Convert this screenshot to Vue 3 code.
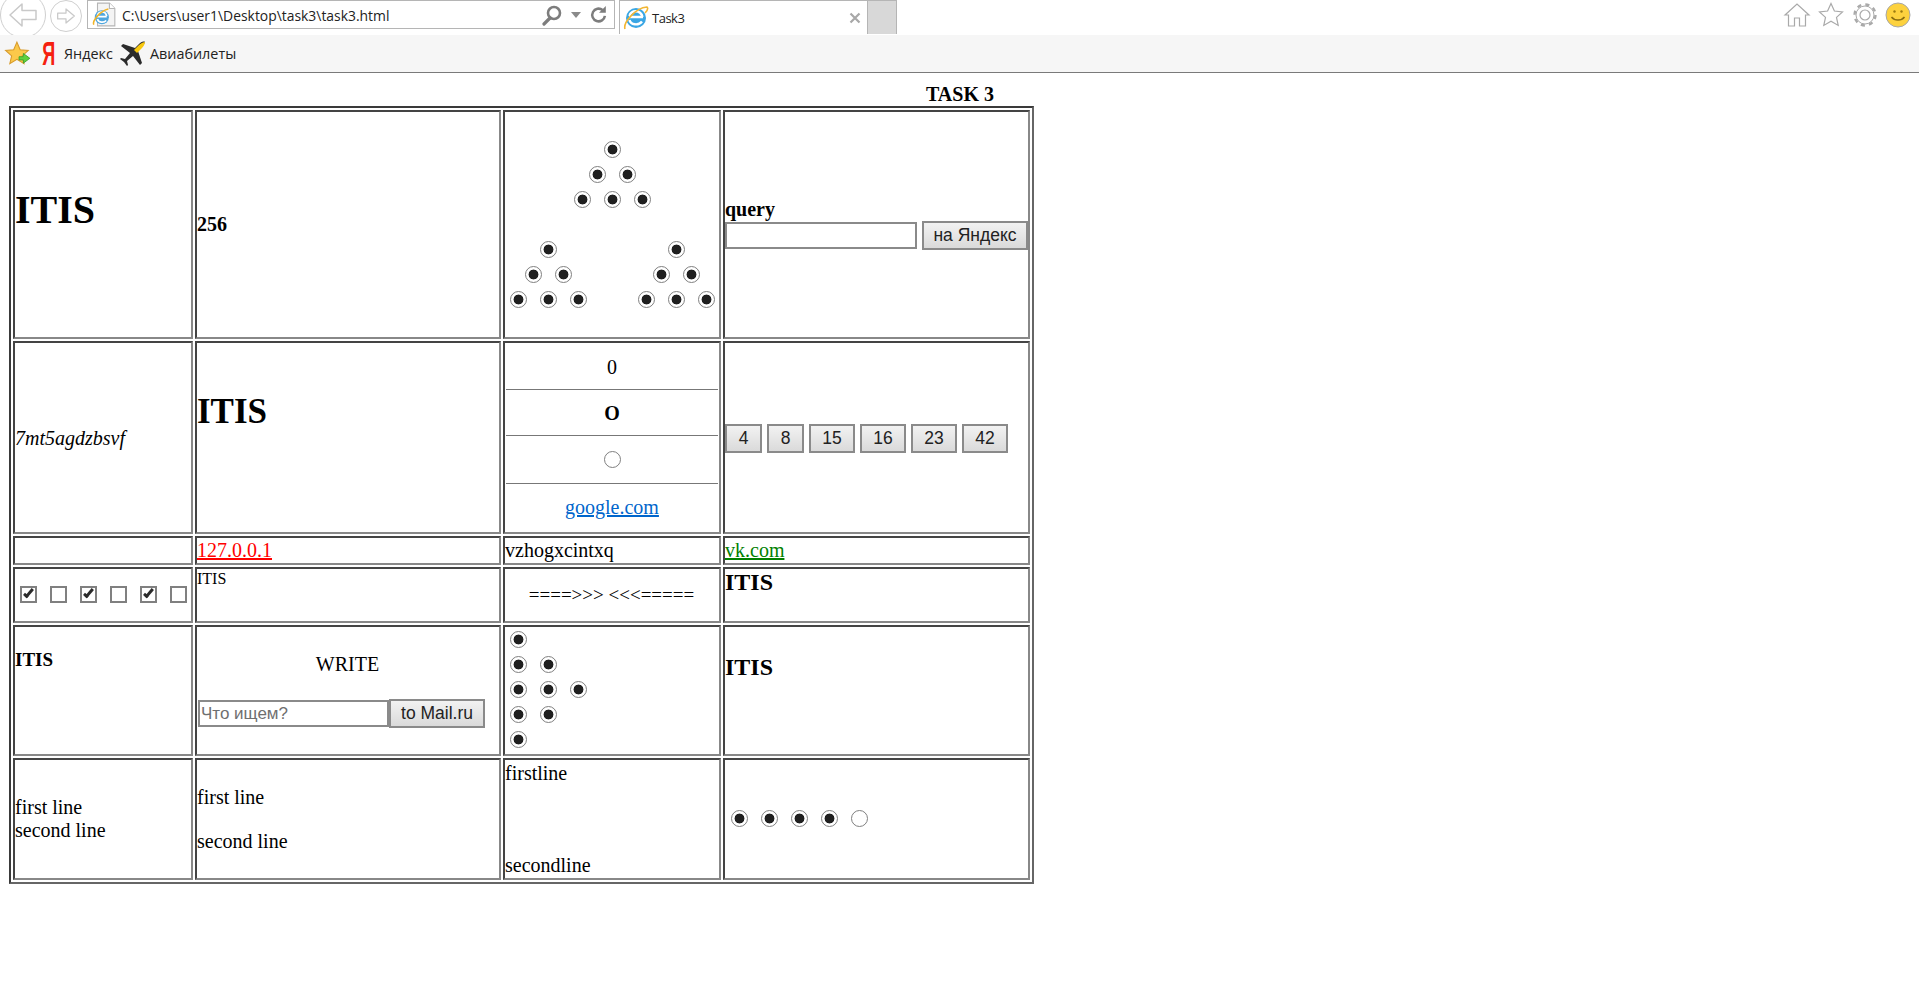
<template>
  <div class="browser">
    <header class="chrome">
      <div class="top-row">
        <div class="nav">
          <button class="nav-btn back" aria-label="back">
            <svg viewBox="0 0 32 32" width="32" height="32"><path d="M3 16 15 5v6.500h14v9H15V27z" fill="none" stroke="#c9c9c9" stroke-width="1.500" stroke-linejoin="round"/></svg>
          </button>
          <button class="nav-btn forward" aria-label="forward">
            <svg viewBox="0 0 24 24" width="20" height="20"><path d="M22 12 12 3.500v5H2v7h10v5z" fill="none" stroke="#c9c9c9" stroke-width="1.500" stroke-linejoin="round"/></svg>
          </button>
        </div>
        <div class="address">
          <svg class="page-icon" viewBox="0 0 24 24" width="26" height="26">
            <path d="M6 1h11l5 5v16H6z" fill="#f4f4f4" stroke="#b5b5b5"/>
            <path d="M17 1v5h5" fill="#fff" stroke="#b5b5b5"/>
            <circle cx="10" cy="14" r="6.500" fill="#4da6de"/>
            <path d="M5.500 13.500h9M6 15.500c.5 3.500 6 4 8 1.500M6 13c0-4 7-6 8.500 0" fill="none" stroke="#fff" stroke-width="1.600"/>
            <path d="M2.500 21C1 17 9 8 16 6.500" fill="none" stroke="#f0b429" stroke-width="1.400"/>
          </svg>
          <span class="url">C:\Users\user1\Desktop\task3\task3.html</span>
          <span class="addr-tools">
            <svg viewBox="0 0 22 22" width="22" height="22"><circle cx="13" cy="9" r="6" fill="none" stroke="#7d7d7d" stroke-width="2.600"/><path d="M9 14 3 20" stroke="#7d7d7d" stroke-width="3.200" stroke-linecap="round"/></svg>
            <svg viewBox="0 0 10 6" width="10" height="6"><path d="M0 0h10L5 6z" fill="#8a8a8a"/></svg>
            <svg viewBox="0 0 22 22" width="20" height="20"><path d="M17.500 12a7 7 0 1 1-2.600-6.500" fill="none" stroke="#7d7d7d" stroke-width="2.800"/><path d="M18.500 1v7.500H11z" fill="#7d7d7d"/></svg>
          </span>
        </div>
        <div class="tab">
          <svg viewBox="0 0 26 26" width="26" height="26">
            <circle cx="13" cy="13" r="10" fill="#3aa6e4"/>
            <path d="M6 12h14M6.500 15c1 5 9 6 12.500 1.500M6.500 11c1-6 11-7 13 1" fill="none" stroke="#fff" stroke-width="2.400"/>
            <path d="M2 24C0 18 12 3 24 2c2 2-1 5-2 6" fill="none" stroke="#f2b632" stroke-width="1.600"/>
          </svg>
          <span class="tab-title">Task3</span>
          <svg class="tab-close" viewBox="0 0 12 12" width="12" height="12"><path d="M1.500 1.500l9 9m0-9-9 9" stroke="#a8a8a8" stroke-width="2.200"/></svg>
        </div>
        <div class="new-tab"></div>
        <div class="right-tools">
          <svg viewBox="0 0 28 28" width="28" height="28"><path d="M2 14 14 3l12 11h-3.500v11h-6v-8h-5v8h-6V14z" fill="none" stroke="#a9a9a9" stroke-width="1.200"/></svg>
          <svg viewBox="0 0 28 28" width="28" height="28"><path d="m14 2.500 3.400 7.500 8.100.9-6 5.500 1.700 8-7.200-4.100-7.200 4.100 1.700-8-6-5.500 8.100-.9z" fill="none" stroke="#a9a9a9" stroke-width="1.200"/></svg>
          <svg viewBox="0 0 28 28" width="28" height="28"><circle cx="14" cy="14" r="5" fill="none" stroke="#a9a9a9" stroke-width="1.200"/><circle cx="14" cy="14" r="10.500" fill="none" stroke="#a9a9a9" stroke-width="2.400" stroke-dasharray="4.100 4.150"/><circle cx="14" cy="14" r="9" fill="none" stroke="#a9a9a9" stroke-width="1"/></svg>
          <svg viewBox="0 0 26 26" width="26" height="26"><circle cx="13" cy="13" r="12" fill="#fdd23e" stroke="#a8a8a8"/><circle cx="9.500" cy="9.500" r="1.200" fill="#9a7a10"/><circle cx="16.500" cy="9.500" r="1.200" fill="#9a7a10"/><path d="M6.500 15c3 4 10 4 13 0" fill="none" stroke="#8a6d10" stroke-width="1.500"/></svg>
        </div>
      </div>
      <div class="fav-row">
        <svg viewBox="0 0 26 26" width="28" height="28"><path d="m12 2 3 7 7.500.7-5.600 5 1.700 7.300L12 18l-6.600 4 1.700-7.300-5.600-5L9 9z" fill="#fbc94a" stroke="#d79a2b"/><path d="M14 15.500h4v-3l6 4.500-6 4.500v-3h-4z" fill="#5fd13f" stroke="#3b9e28" stroke-width=".8"/></svg>
        <span class="ya"><span>Я</span></span>
        <span class="fav-text">Яндекс</span>
        <svg class="plane" viewBox="0 0 26 26" width="26" height="26"><path d="M25 1c-2-1-4 0-6 2l-4 4L3 3 1 5l9 7-5 6-4-1-1 1 4 3 3 4 1-1-1-4 6-5 7 9 2-2-4-12 4-4c2-2 3-5 3-6z" fill="#2b2b2b"/><path d="M25 1c-1 0-4 1-6 3l-5 5 3 3 5-5c2-2 3-5 3-6z" fill="#f8c80e"/></svg>
        <span class="fav-text tight">Авиабилеты</span>
      </div>
    </header>

    <main class="page">
      <table class="task">
        <caption>TASK 3</caption>
        <colgroup>
          <col class="c1" /><col class="c2" /><col class="c3" /><col class="c4" />
        </colgroup>
        <tbody>
          <tr class="r1">
            <td><h1>ITIS</h1></td>
            <td><b>256</b></td>
            <td class="center tree-cell">
              <div v-for="(n, i) in [1, 2, 3]" :key="i" class="radios line">
                <input v-for="k in n" :key="k" type="radio" checked />
              </div>
              <div class="tree-gap"></div>
              <div class="tree-pair">
                <div v-for="side in 2" :key="side" class="half">
                  <div v-for="(n, i) in [1, 2, 3]" :key="i" class="radios line">
                    <input v-for="k in n" :key="k" type="radio" checked />
                  </div>
                </div>
              </div>
            </td>
            <td>
              <b class="query">query</b>
              <div class="search">
                <input type="text" class="field q" />
                <button class="btn ya-btn">на Яндекс</button>
              </div>
            </td>
          </tr>
          <tr class="r2">
            <td class="seven"><i>7mt5agdzbsvf</i></td>
            <td><span class="h2">ITIS</span></td>
            <td class="stack">
              <div class="s1">0</div>
              <hr />
              <div class="s2"><b>O</b></div>
              <hr />
              <div class="s3 radios"><input type="radio" /></div>
              <hr />
              <div class="s4"><a href="#" class="blue">google.com</a></div>
            </td>
            <td>
              <div class="nums">
                <button v-for="n in nums" :key="n" class="btn num">{{ n }}</button>
              </div>
            </td>
          </tr>
          <tr class="r3">
            <td></td>
            <td><a href="#" class="red">127.0.0.1</a></td>
            <td>vzhogxcintxq</td>
            <td><a href="#" class="green">vk.com</a></td>
          </tr>
          <tr class="r4">
            <td>
              <div class="checks">
                <input v-for="(c, i) in checks" :key="i" type="checkbox" :checked="c" />
              </div>
            </td>
            <td class="top small">ITIS</td>
            <td class="center arrows">====&gt;&gt;&gt; &lt;&lt;&lt;=====</td>
            <td class="top tight-top"><span class="h3 raised">ITIS</span></td>
          </tr>
          <tr class="r5">
            <td class="itis-small"><b>ITIS</b></td>
            <td>
              <div class="center write">WRITE</div>
              <div class="mail">
                <input type="text" class="field m" placeholder="Что ищем?" />
                <button class="btn mail-btn">to Mail.ru</button>
              </div>
            </td>
            <td class="flower">
              <div v-for="(n, i) in [1, 2, 3, 2, 1]" :key="i" class="radios line left">
                <input v-for="k in n" :key="k" type="radio" checked />
              </div>
            </td>
            <td class="itis-big"><span class="h3">ITIS</span></td>
          </tr>
          <tr class="r6">
            <td>first line<br />second line</td>
            <td><p>first line</p><p>second line</p></td>
            <td class="spread"><div>firstline</div><div>secondline</div></td>
            <td>
              <div class="radios row6">
                <input v-for="(c, i) in [true, true, true, true, false]" :key="i" type="radio" :checked="c" />
              </div>
            </td>
          </tr>
        </tbody>
      </table>
    </main>
  </div>
</template>

<script setup>
const nums = [4, 8, 15, 16, 23, 42];
const checks = [true, false, true, false, true, false];
</script>

<style>
html, body {
  background: #fff;
}
</style>

<style scoped>
.browser {
  font-family: "Liberation Serif", serif;
  color: #000;
}

.chrome {
  font-family: "Open Sans", sans-serif;
  height: 73px;
  box-sizing: border-box;
  border-bottom: 1px solid #7a7a7a;
  background: #f6f6f6;
}

.top-row {
  display: flex;
  height: 35px;
  background: #fff;
  overflow: hidden;
}

.nav {
  display: flex;
  align-items: center;
  width: 87px;
  flex: none;
}

.nav-btn {
  border: 1px solid #cfcfcf;
  border-radius: 50%;
  background: #fff;
  padding: 0;
  display: flex;
  align-items: center;
  justify-content: center;
  flex: none;
}

.back {
  width: 46px;
  height: 46px;
  margin-top: -6px;
}

.forward {
  width: 32px;
  height: 32px;
  margin-left: 4px;
  margin-top: -3px;
}

.address {
  width: 528px;
  height: 29px;
  flex: none;
  margin-right: 2px;
  box-sizing: border-box;
  border: 1px solid #b5b5b5;
  display: flex;
  align-items: center;
  padding: 0 5px 0 3px;
}

.page-icon {
  flex: none;
}

.url {
  font-size: 13.900px;
  margin-left: 5px;
  flex: 1;
  color: #222;
  padding-top: 1px;
}

.addr-tools {
  display: flex;
  align-items: center;
  gap: 8px;
}

.tab {
  width: 249px;
  height: 34px;
  flex: none;
  box-sizing: border-box;
  border: 1px solid #b5b5b5;
  border-bottom: 0;
  margin-left: 2px;
  display: flex;
  align-items: center;
  padding: 0 6px 0 3px;
  gap: 3px;
}

.tab-title {
  flex: 1;
  font-size: 13px;
  letter-spacing: -0.5px;
  color: #222;
}

.new-tab {
  width: 29px;
  height: 34px;
  flex: none;
  box-sizing: border-box;
  background: #d8d8d8;
  border: 1px solid #b5b5b5;
  border-left: 0;
  border-bottom: 0;
}

.right-tools {
  margin-left: auto;
  display: flex;
  align-items: center;
  gap: 6px;
  padding: 0 8px 6px 0;
}

.fav-row {
  display: flex;
  align-items: center;
  height: 37px;
  padding-left: 4px;
}

.ya {
  width: 14px;
  margin-left: 10px;
  display: flex;
  justify-content: center;
  font-family: "Liberation Sans", sans-serif;
  font-weight: bold;
  color: #f5200e;
  font-size: 33px;
  line-height: 1;
}

.ya span {
  display: inline-block;
  transform: scaleX(0.55);
}

.fav-text {
  font-size: 14.400px;
  color: #222;
  margin-left: 8px;
}

.fav-text.tight {
  margin-left: 4px;
}

.plane {
  margin-left: 7px;
}

.page {
  padding: 10px 0 0 9px;
}

.task {
  width: 1025px;
  table-layout: fixed;
  border-collapse: separate;
  border-spacing: 2px;
  border: 2px solid #3a3a3a;
  border-right-color: #666;
  border-bottom-color: #666;
  font-size: 20px;
  line-height: 23px;
}

.task caption {
  text-align: right;
  font-weight: bold;
  font-size: 20px;
  line-height: 23px;
  padding-right: 40px;
}

.c1 { width: 180px; }
.c2 { width: 306px; }
.c3 { width: 218px; }

.task td {
  border: 2px solid #444;
  border-right-color: #888;
  border-bottom-color: #888;
  padding: 1px 1px 1px 0;
  vertical-align: middle;
}

.r1 { height: 229px; }
.r2 { height: 193px; }
.r3 { height: 28px; }
.r4 { height: 56px; }
.r5 { height: 131px; }
.r6 { height: 119px; }

h1 {
  margin: 0;
  font-size: 40px;
  line-height: 46px;
  font-weight: bold;
  padding-bottom: 30px;
}

.h2 {
  display: block;
  font-size: 35px;
  font-weight: bold;
  line-height: 40px;
  padding-bottom: 52px;
}

.h3 {
  font-size: 24px;
  font-weight: bold;
  line-height: 28px;
}

.h3.raised {
  display: block;
  margin-top: -1px;
}

.center {
  text-align: center;
}

.task td.top {
  vertical-align: top;
}

.small {
  font-size: 16px;
  line-height: 18px;
}

.radios input {
  appearance: none;
  width: 17px;
  height: 17px;
  margin: 0 6.500px;
  box-sizing: border-box;
  border: 1.500px solid #808080;
  border-radius: 50%;
  background: #fff;
  vertical-align: middle;
  flex: none;
}

.radios input:checked {
  background: radial-gradient(circle, #1f1f1f 0 4.700px, #fff 5.200px);
}

.line {
  height: 25px;
  display: flex;
  align-items: center;
  justify-content: center;
}

.line.left {
  justify-content: flex-start;
  margin-left: -2px;
}

.task td.tree-cell {
  padding: 1px 1px 2px;
}

.tree-gap {
  height: 25px;
}

.tree-pair {
  display: flex;
  justify-content: space-between;
  margin: 0 -3px;
}

.half {
  width: 90px;
}

.query {
  display: block;
  line-height: 20px;
}

.search {
  display: flex;
  align-items: center;
  gap: 5px;
  margin-top: 2px;
}

.field {
  font-family: "Liberation Sans", sans-serif;
  font-size: 17px;
  border: 2px solid #8a8a8a;
  box-sizing: border-box;
  height: 27px;
  padding: 1px;
  outline: none;
  background: #fff;
}

.field::placeholder {
  color: #6f6f6f;
  opacity: 1;
}

.q { width: 192px; }
.m { width: 191px; }

.btn {
  font-family: "Liberation Sans", sans-serif;
  font-size: 17.500px;
  color: #222;
  height: 29px;
  box-sizing: border-box;
  border: 2px solid #8a8a8a;
  background: linear-gradient(#f2f2f2, #dadada);
  padding: 0;
  flex: none;
}

.ya-btn { width: 106px; }

.task td.stack {
  padding: 0;
}

.stack > div {
  display: flex;
  align-items: center;
  justify-content: center;
  box-sizing: border-box;
}

.s1 { height: 46px; padding-top: 3px; }
.s2 { height: 45px; padding-top: 2px; }
.s3 { height: 47px; }
.s4 { height: 48px; padding-bottom: 2px; }

hr {
  margin: 0 1px;
  border: 0;
  border-top: 1px solid #777;
}

.blue { color: #0066cc; }
.red { color: #ff0000; }
.green { color: #008000; }

.task td.seven {
  padding-top: 3px;
}

.nums {
  display: flex;
  gap: 5px;
  margin-top: 2px;
}

.num {
  width: 46px;
}

.num:nth-child(1), .num:nth-child(2) {
  width: 37px;
}

.checks {
  display: flex;
  gap: 13px;
  padding-left: 5px;
  margin-bottom: 2px;
}

.checks input {
  appearance: none;
  margin: 0;
  width: 17px;
  height: 17px;
  box-sizing: border-box;
  border: 2px solid #808080;
  background: #fff;
  position: relative;
}

.checks input:checked::before {
  content: "";
  position: absolute;
  left: 4px;
  top: -1px;
  width: 5px;
  height: 11px;
  border: solid #2a2a2a;
  border-width: 0 3px 3px 0;
  transform: rotate(40deg);
  box-sizing: border-box;
}

.task td.arrows {
  font-size: 19px;
  padding-bottom: 3px;
}

.task td.tight-top {
  padding-top: 0;
}

.task td.itis-small {
  vertical-align: top;
  padding-top: 21px;
  font-size: 19px;
}

.task td.itis-big {
  vertical-align: top;
  padding-top: 26px;
}

.write {
  margin-bottom: 23px;
}

.mail {
  display: flex;
  align-items: center;
  margin-left: 1px;
}

.mail-btn {
  width: 96px;
}

.task td.flower {
  padding: 0 1px 2px 0;
}

p {
  margin: 0;
}

p + p {
  margin-top: 21px;
}

.task td.spread {
  vertical-align: top;
  padding-top: 2px;
}

.spread > div + div {
  margin-top: 69px;
}

.row6 {
  display: flex;
  margin: 0 0 2px -1px;
}
</style>
